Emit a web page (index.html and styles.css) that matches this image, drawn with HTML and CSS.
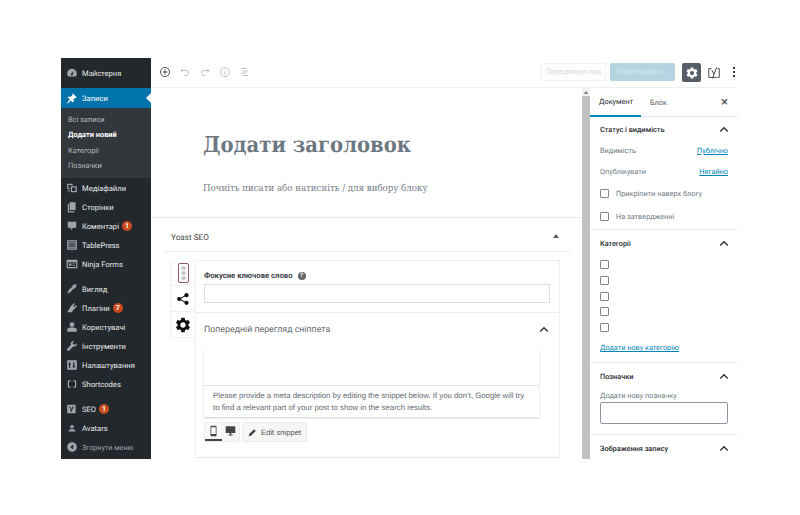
FILE: index.html
```html
<!doctype html>
<html>

<head>
    <meta charset="utf-8" />
    <title>Додати новий запис</title>
    <link rel="stylesheet" href="styles.css">
</head>

<body>
    <svg class="defs" width="0" height="0">
        <symbol id="gear" viewBox="0 0 24 24"><path d="M19.14 12.94c.04-.3.06-.61.06-.94 0-.32-.02-.64-.07-.94l2.03-1.58c.18-.14.23-.41.12-.61l-1.92-3.32c-.12-.22-.37-.29-.59-.22l-2.39.96c-.5-.38-1.03-.7-1.62-.94l-.36-2.54c-.04-.24-.24-.41-.48-.41h-3.84c-.24 0-.43.17-.47.41l-.36 2.54c-.59.24-1.13.57-1.62.94l-2.39-.96c-.22-.08-.47 0-.59.22L2.74 8.87c-.12.21-.08.47.12.61l2.03 1.58c-.05.3-.09.63-.09.94s.02.64.07.94l-2.03 1.58c-.18.14-.23.41-.12.61l1.92 3.32c.12.22.37.29.59.22l2.39-.96c.5.38 1.03.7 1.62.94l.36 2.54c.05.24.24.41.48.41h3.84c.24 0 .44-.17.47-.41l.36-2.54c.59-.24 1.13-.56 1.62-.94l2.39.96c.22.08.47 0 .59-.22l1.92-3.32c.12-.22.07-.47-.12-.61l-2.01-1.58zM12 15.6c-1.98 0-3.6-1.62-3.6-3.6s1.62-3.6 3.6-3.6 3.6 1.62 3.6 3.6-1.62 3.6-3.6 3.6z"/></symbol>
        <symbol id="chevron" viewBox="0 0 12 8"><path d="M1.5 6.5L6 2l4.5 4.5" fill="none" stroke="currentColor" stroke-width="1.8"/></symbol>
    </svg>

    <div class="window">
        <nav class="admin-menu">
            <a class="menu-item"><svg class="menu-icon" viewBox="0 0 20 20"><path d="M10 3a8 8 0 0 0-8 8c0 2 .7 3.800 2 5h12c1.300-1.200 2-3 2-5a8 8 0 0 0-8-8zm1.500 8.800a1.800 1.800 0 1 1-2-1.300L13 6.500z"/></svg>Майстерня</a>
            <a class="menu-item is-current"><svg class="menu-icon" viewBox="0 0 20 20"><path d="M11 2l7 7-1.500 1-1-.5-3 3 .5 3.500-1.500 1.500-3.500-3.500L3 19l-1-1 4.500-5.500L3 9l1.500-1.500 3.500.5 3-3-.5-1z"/></svg>Записи</a>
            <div class="submenu">
                <a>Всі записи</a>
                <a class="is-active">Додати новий</a>
                <a>Категорії</a>
                <a>Позначки</a>
            </div>
            <a class="menu-item"><svg class="menu-icon" viewBox="0 0 20 20"><path d="M2 3h9v3H9V5H4v5h2v2H2zM8 7h10v10H8zm2 2v6h6V9zM3 14h3v2H3z"/></svg>Медіафайли</a>
            <a class="menu-item"><svg class="menu-icon" viewBox="0 0 20 20"><path d="M6 2h10v13H6zM3 5h2v12h9v2H3z"/></svg>Сторінки</a>
            <a class="menu-item"><svg class="menu-icon" viewBox="0 0 20 20"><path d="M3 3h14v10h-5l-4 4v-4H3z"/></svg>Коментарі<span class="badge">1</span></a>
            <a class="menu-item"><svg class="menu-icon" viewBox="0 0 20 20"><path d="M2 2h16v16H2zm2 2v2h12V4zm0 3.500v2h12v-2zM4 11v2h12v-2zm0 3.500V16h12v-1.500z" fill-rule="evenodd"/></svg>TablePress</a>
            <a class="menu-item"><svg class="menu-icon" viewBox="0 0 20 20"><path d="M1 3h18v14H1zm2 4v8h14V7zm2 2h4v4H5zm6 0h4v1.500h-4zm0 3h4v1.500h-4z" fill-rule="evenodd"/></svg>Ninja Forms</a>
            <div class="menu-gap"></div>
            <a class="menu-item"><svg class="menu-icon" viewBox="0 0 20 20"><path d="M2 18l3-7 4-3 3-5 6-1-2 6-5 3-3 4z"/></svg>Вигляд</a>
            <a class="menu-item"><svg class="menu-icon" viewBox="0 0 20 20"><path d="M13 2l2 1-3 4 2 1 3-3 1 2-4 5-2 1-2 4H3v-2l3-4 1-3z"/></svg>Плагіни<span class="badge">7</span></a>
            <a class="menu-item"><svg class="menu-icon" viewBox="0 0 20 20"><circle cx="10" cy="6" r="4"/><path d="M2 18v-3c0-2 2-4 5-4h6c3 0 5 2 5 4v3z"/></svg>Користувачі</a>
            <a class="menu-item"><svg class="menu-icon" viewBox="0 0 20 20"><path d="M18 5l-3 3-3-1-1-3 3-2c-3-1-6 1-6 4 0 1 0 1.500.3 2L2 15c-1 1 1 4 3 3l7-7c3 1 7-2 6-6z"/></svg>Інструменти</a>
            <a class="menu-item"><svg class="menu-icon" viewBox="0 0 20 20"><path d="M2 2h16v16H2zm3 3v3H4v2h1v5h2v-5h1V8H7V5zm7 0v6h-1v2h1v2h2v-2h1v-2h-1V5z" fill-rule="evenodd"/></svg>Налаштування</a>
            <a class="menu-item"><svg class="menu-icon" viewBox="0 0 20 20"><path d="M3 4h5v2H5v8h3v2H3zm9 0h5v12h-5v-2h3V6h-3z"/></svg>Shortcodes</a>
            <div class="menu-gap"></div>
            <a class="menu-item"><svg class="menu-icon" viewBox="0 0 20 20"><path d="M2 3h14v14H2zm3 3l3 6-1 3h2l4-9h-2l-2 5-2-5z" fill-rule="evenodd"/></svg>SEO<span class="badge">1</span></a>
            <a class="menu-item"><svg class="menu-icon" viewBox="0 0 20 20"><circle cx="10" cy="8" r="3"/><path d="M4 16c0-3 3-4 6-4s6 1 6 4z"/></svg>Avatars</a>
            <a class="menu-item is-muted"><svg class="menu-icon" viewBox="0 0 20 20"><path d="M10 2a8 8 0 1 0 0 16 8 8 0 0 0 0-16zm2 4v8L7 10z" fill-rule="evenodd"/></svg>Згорнути меню</a>
        </nav>

        <div class="editor">
            <header class="topbar">
                <div class="tools">
                    <svg class="tool is-dark" viewBox="0 0 24 24"><circle cx="12" cy="12" r="9"/><path d="M12 7v10M7 12h10"/></svg>
                    <svg class="tool" viewBox="0 0 24 24"><path d="M8 5L4 9l4 4M4 9h10a5 5 0 0 1 0 10h-3"/></svg>
                    <svg class="tool" viewBox="0 0 24 24"><path d="M16 5l4 4-4 4M20 9H10a5 5 0 0 0 0 10h3"/></svg>
                    <svg class="tool" viewBox="0 0 24 24"><circle cx="12" cy="12" r="9"/><path d="M12 11v6M12 7v2"/></svg>
                    <svg class="tool" viewBox="0 0 24 24"><path d="M5 5h10M8 10h10M5 14h10M8 19h10"/></svg>
                </div>
                <div class="actions">
                    <span class="btn-preview">Передперегляд</span>
                    <span class="btn-publish">Опублікувати...</span>
                    <span class="btn-settings"><svg class="icon-gear" fill="#fff"><use href="#gear"/></svg></span>
                    <svg class="yoast-mark" viewBox="0 0 16 16"><path d="M5 3H2v10h9M12 3h2v10h-2M5.500 4.500l2.500 5 3-8M8 9.500l-1.500 5" fill="none" stroke="#444" stroke-width="1.100"/></svg>
                    <span class="dots"><i></i><i></i><i></i></span>
                </div>
            </header>

            <div class="workspace">
                <main class="content">
                    <div class="post-area">
                        <h1 class="post-title">Додати заголовок</h1>
                        <p class="post-hint">Почніть писати або натисніть / для вибору блоку</p>
                    </div>
                    <section class="metabox">
                        <div class="metabox-head">
                            <span>Yoast SEO</span>
                            <i class="caret"></i>
                        </div>
                        <div class="yoast">
                            <div class="yoast-tabs">
                                <div class="yoast-tab">
                                    <span class="traffic"><i></i><i></i><i></i></span>
                                </div>
                                <div class="yoast-tab">
                                    <svg class="tab-icon" viewBox="0 0 20 20"><circle cx="15" cy="4.500" r="3"/><circle cx="15" cy="15.500" r="3"/><circle cx="4.500" cy="10" r="3"/><path d="M15 4.500L4.500 10 15 15.500" fill="none" stroke="#111" stroke-width="1.500"/></svg>
                                </div>
                                <div class="yoast-tab">
                                    <svg class="tab-icon is-gear" fill="#111"><use href="#gear"/></svg>
                                </div>
                            </div>
                            <div class="yoast-panel">
                                <div class="focus-row">
                                    <label class="focus-label">Фокусне ключове слово<span class="help">?</span></label>
                                    <div class="focus-input"></div>
                                </div>
                                <div class="preview-head">
                                    <span>Попередній перегляд сніппета</span>
                                    <svg class="chevron"><use href="#chevron"/></svg>
                                </div>
                                <div class="snippet">
                                    <div class="snippet-top"></div>
                                    <p class="snippet-text">Please provide a meta description by editing the snippet below. If you don’t, Google will try to find a relevant part of your post to show in the search results.</p>
                                </div>
                                <div class="snippet-tools">
                                    <div class="device-group">
                                        <span class="device is-on">
                                            <svg viewBox="0 0 12 16"><path d="M3 1h6a1 1 0 0 1 1 1v12a1 1 0 0 1-1 1H3a1 1 0 0 1-1-1V2a1 1 0 0 1 1-1zm0 2v9h6V3z" fill-rule="evenodd"/></svg>
                                        </span>
                                        <span class="device">
                                            <svg viewBox="0 0 16 16"><path d="M1 1h14v10H1zM5 13h6v1.500H5zM7 11h2v2H7z"/></svg>
                                        </span>
                                    </div>
                                    <span class="edit-snippet">
                                        <svg viewBox="0 0 12 12"><path d="M1 11l.6-3L8 1.600 10.400 4 4 10.400z"/></svg>Edit snippet
                                    </span>
                                </div>
                            </div>
                        </div>
                    </section>
                </main>

                <div class="scrollbar"><i class="scroll-up"></i><div class="scroll-thumb"></div></div>

                <aside class="settings">
                    <div class="settings-tabs">
                        <span class="settings-tab is-active">Документ</span>
                        <span class="settings-tab">Блок</span>
                        <span class="settings-close">×</span>
                    </div>

                    <section class="panel panel-status">
                        <div class="panel-head"><span>Статус і видимість</span><svg class="chevron"><use href="#chevron"/></svg></div>
                        <div class="status-row"><span>Видимість</span><a>Публічно</a></div>
                        <div class="status-row"><span>Опублікувати</span><a>Негайно</a></div>
                        <div class="check-row is-wide"><i class="box"></i>Прикріпити наверх блогу</div>
                        <div class="check-row is-wide"><i class="box"></i>На затвердженні</div>
                    </section>

                    <section class="panel panel-cats">
                        <div class="panel-head"><span>Категорії</span><svg class="chevron"><use href="#chevron"/></svg></div>
                        <div class="check-row"><i class="box"></i></div>
                        <div class="check-row"><i class="box"></i></div>
                        <div class="check-row"><i class="box"></i></div>
                        <div class="check-row"><i class="box"></i></div>
                        <div class="check-row"><i class="box"></i></div>
                        <a class="panel-link">Додати нову категорію</a>
                    </section>

                    <section class="panel panel-tags">
                        <div class="panel-head"><span>Позначки</span><svg class="chevron"><use href="#chevron"/></svg></div>
                        <div class="tag-label">Додати нову позначку</div>
                        <div class="tag-input"></div>
                    </section>

                    <section class="panel panel-image">
                        <div class="panel-head"><span>Зображення запису</span><svg class="chevron"><use href="#chevron"/></svg></div>
                    </section>
                </aside>
            </div>
        </div>
    </div>
</body>

</html>
```

FILE: styles.css
```css
* {
    box-sizing: border-box;
}

html,
body {
    margin: 0;
    padding: 0;
    background: #fff;
}

body {
    font-family: Roboto, sans-serif;
    font-size: 7.300px;
    color: #32373c;
    text-rendering: geometricPrecision;
}

.defs {
    display: block;
    height: 0;
}

.window {
    display: flex;
    width: 677px;
    height: 401px;
    margin: 58px 0 0 61px;
    overflow: hidden;
}

/* admin menu */
.admin-menu {
    flex: 0 0 90px;
    background: #23282d;
    padding-top: 5px;
    color: #eee;
}

.menu-item {
    display: flex;
    align-items: center;
    height: 19px;
    padding: 1px 0 0 5px;
    font-size: 7.600px;
    color: #e8eaeb;
}

.menu-icon {
    flex: 0 0 12px;
    width: 12px;
    height: 12px;
    margin-right: 4px;
    fill: #a0a5aa;
}

.menu-item.is-current {
    position: relative;
    height: 19.500px;
    margin-top: 6px;
    background: #0073aa;
    color: #fff;
}

.menu-item.is-current .menu-icon {
    fill: #fff;
}

.menu-item.is-current::after {
    content: "";
    position: absolute;
    right: 0;
    top: 5px;
    border: 5px solid transparent;
    border-right-color: #f1f1f1;
    border-left-width: 0;
}

.menu-item.is-muted {
    color: #a0a5aa;
    font-size: 7.200px;
}

.submenu {
    display: flex;
    flex-direction: column;
    height: 70.500px;
    padding: 4px 0 0 7px;
    background: #32373c;
    color: #b4b9be;
    font-size: 7.400px;
}

.submenu a {
    height: 15.600px;
    line-height: 15.600px;
}

.submenu .is-active {
    color: #fff;
    font-weight: bold;
}

.menu-gap {
    height: 6px;
}

.badge {
    width: 10px;
    height: 10px;
    margin-left: 3px;
    border-radius: 50%;
    background: #ca4a1f;
    color: #fff;
    font-size: 7px;
    font-weight: bold;
    line-height: 10px;
    text-align: center;
}

/* editor */
.editor {
    flex: 1;
    display: flex;
    flex-direction: column;
    min-width: 0;
}

.topbar {
    flex: 0 0 30px;
    display: flex;
    justify-content: space-between;
    border-bottom: 1px solid #eef0f1;
}

.tools {
    display: flex;
    gap: 8px;
    padding: 8px 0 0 8px;
}

.tool {
    width: 12px;
    height: 12px;
    fill: none;
    stroke: #b5bcc2;
    stroke-width: 1.800;
}

.tool.is-dark {
    stroke: #3c434a;
}

.actions {
    display: flex;
    padding: 5px 0 0 0;
}

.btn-preview {
    width: 65px;
    height: 18px;
    border: 1px solid #f1f3f4;
    border-radius: 2px;
    color: #d5d9dc;
    font-size: 7.600px;
    line-height: 16px;
    text-align: center;
}

.btn-publish {
    width: 65px;
    height: 18px;
    margin-left: 4px;
    border-radius: 2px;
    background: #b5d4e2;
    color: #d3e5ee;
    font-size: 7.600px;
    line-height: 18px;
    text-align: center;
}

.btn-settings {
    display: flex;
    align-items: center;
    justify-content: center;
    width: 19px;
    height: 19px;
    margin-left: 7px;
    border-radius: 2px;
    background: #555d66;
}

.icon-gear {
    width: 14px;
    height: 14px;
}

.yoast-mark {
    width: 14px;
    height: 14px;
    margin: 3px 0 0 6px;
}

.dots {
    display: flex;
    flex-direction: column;
    gap: 2px;
    margin: 4px 3px 0 12px;
}

.dots i {
    width: 2px;
    height: 2px;
    background: #32373c;
}

.workspace {
    flex: 1;
    display: flex;
    min-height: 0;
}

.content {
    flex: 0 0 431px;
    overflow: hidden;
}

.post-area {
    height: 129px;
    padding: 43px 0 0 52px;
}

.post-title {
    margin: 0;
    font-family: "DejaVu Serif", serif;
    font-stretch: condensed;
    font-size: 21.800px;
    font-weight: bold;
    line-height: 30px;
    color: #6c7781;
}

.post-hint {
    margin: 22px 0 0;
    font-family: "DejaVu Serif", serif;
    font-stretch: condensed;
    font-size: 9.600px;
    color: #757d85;
}

.metabox {
    border-top: 1px solid #e8eaeb;
    padding: 0 12px;
}

.metabox-head {
    display: flex;
    align-items: center;
    justify-content: space-between;
    height: 34px;
    padding: 6px 11px 0 8px;
    border-bottom: 1px solid #eceeef;
    font-size: 8.200px;
    color: #444;
}

.caret {
    margin-top: -3px;
    border: 3px solid transparent;
    border-bottom: 4px solid #555d66;
    border-top-width: 0;
}

.yoast {
    display: flex;
    padding: 8px 10px 0 7px;
}

.yoast-tabs {
    flex: 0 0 25px;
}

.yoast-tab {
    display: flex;
    align-items: center;
    justify-content: center;
    height: 26px;
    border: 1px solid #f1f1f1;
    border-right: 0;
    border-top: 0;
}

.traffic {
    display: flex;
    flex-direction: column;
    gap: 1px;
    padding: 2px 2px;
    border: 1px solid #8f5a6e;
    border-radius: 2px;
}

.traffic i {
    width: 5px;
    height: 4px;
    border-radius: 50%;
    background: #c9c9c9;
}

.tab-icon {
    width: 14px;
    height: 14px;
    fill: #111;
}

.tab-icon.is-gear {
    width: 18px;
    height: 18px;
}

.yoast-panel {
    flex: 1;
    height: 198px;
    padding: 0 9px 0 8px;
    border: 1px solid #f0f0f0;
    border-bottom-color: #e8e8e8;
}

.focus-row {
    height: 52px;
    margin: 0 -9px 0 -8px;
    padding: 9px 9px 0 8px;
    border-bottom: 1px solid #eceeef;
}

.focus-label {
    display: flex;
    align-items: center;
    height: 11px;
    font-size: 7.700px;
    font-weight: bold;
    color: #3c434a;
}

.help {
    width: 8px;
    height: 8px;
    margin-left: 5px;
    border-radius: 50%;
    background: #666;
    color: #fff;
    font-size: 6px;
    line-height: 8px;
    text-align: center;
}

.focus-input {
    height: 19px;
    margin-top: 3px;
    border: 1px solid #ddd;
}

.preview-head {
    display: flex;
    align-items: center;
    justify-content: space-between;
    height: 33px;
    font-size: 8.800px;
    color: #646970;
}

.chevron {
    width: 10px;
    height: 7px;
    margin-right: -1px;
    color: #32373c;
}

.preview-head .chevron {
    margin-right: 1px;
}

.snippet {
    width: 335px;
    height: 68px;
    margin-top: 3px;
    box-shadow: 0 1px 2px rgba(0, 0, 0, 0.2);
}

.snippet-top {
    height: 37px;
    border-bottom: 1px solid #e4e4e4;
}

.snippet-text {
    margin: 0;
    padding: 4px 9px 0;
    font-family: "Liberation Sans", sans-serif;
    font-size: 7.800px;
    line-height: 12px;
    color: #646970;
}

.snippet-tools {
    display: flex;
    gap: 2px;
    margin-top: 5px;
}

.device-group {
    display: flex;
    height: 20px;
    border: 1px solid #ececec;
    border-radius: 2px;
    background: #f6f6f6;
}

.device {
    width: 17px;
    padding: 2px 3px 0;
}

.device svg {
    display: block;
    width: 11px;
    height: 12px;
    fill: #444;
}

.device.is-on {
    border-bottom: 2px solid #444;
    background: #f9f9f9;
}

.edit-snippet {
    display: flex;
    align-items: center;
    gap: 4px;
    height: 20px;
    padding: 0 5px;
    border: 1px solid #ececec;
    border-radius: 2px;
    background: #f6f6f6;
    font-family: "Liberation Sans", sans-serif;
    font-size: 7.700px;
    color: #555;
}

.edit-snippet svg {
    width: 9px;
    height: 9px;
    fill: #444;
}

.scrollbar {
    position: relative;
    flex: 0 0 8px;
    padding-top: 8px;
    background: #f1f1f1;
}

.scroll-up {
    position: absolute;
    top: 3px;
    left: 2px;
    border: 2px solid transparent;
    border-bottom: 3px solid #777;
    border-top-width: 0;
}

.scroll-thumb {
    height: 100%;
    background: #c1c1c1;
}

/* settings sidebar */
.settings {
    flex: 1;
    min-width: 0;
    overflow: hidden;
}

.settings-tabs {
    display: flex;
    align-items: center;
    height: 29px;
    border-bottom: 1px solid #e8eaeb;
}

.settings-tab {
    display: flex;
    align-items: center;
    height: 29px;
    padding: 0 9px;
    color: #555d66;
}

.settings-tab.is-active {
    width: 51px;
    border-bottom: 2px solid #0085ba;
    color: #23282d;
}

.settings-close {
    margin-left: auto;
    margin-right: 10px;
    font-size: 13px;
    color: #444;
}

.panel {
    padding: 0 10px;
    border-bottom: 1px solid #e8eaeb;
}

.panel-head {
    display: flex;
    align-items: center;
    justify-content: space-between;
    height: 26px;
    color: #23282d;
    font-weight: 500;
}

.panel-status {
    height: 113px;
}

.panel-status .panel-head {
    height: 23px;
    padding-top: 1px;
}

.status-row {
    display: flex;
    align-items: center;
    justify-content: space-between;
    height: 21px;
    color: #6c7781;
}

.status-row a,
.panel-link {
    color: #0085ba;
    text-decoration: underline;
}

.check-row {
    display: flex;
    align-items: center;
    height: 15.700px;
    color: #6c7781;
}

.check-row.is-wide {
    height: 23px;
}

.box {
    width: 9px;
    height: 9px;
    margin-right: 7px;
    border: 1px solid #7e8993;
    border-radius: 1px;
}

.panel-cats {
    height: 133px;
}

.panel-cats .panel-head {
    margin-bottom: 1px;
}

.panel-link {
    display: block;
    margin-top: 8px;
}

.panel-tags {
    height: 72px;
}

.tag-label {
    margin-top: 2px;
    color: #6c7781;
}

.tag-input {
    height: 22px;
    margin-top: 2px;
    border: 1px solid #8d96a0;
    border-radius: 2px;
}

.panel-image {
    border-bottom: 0;
}
```
